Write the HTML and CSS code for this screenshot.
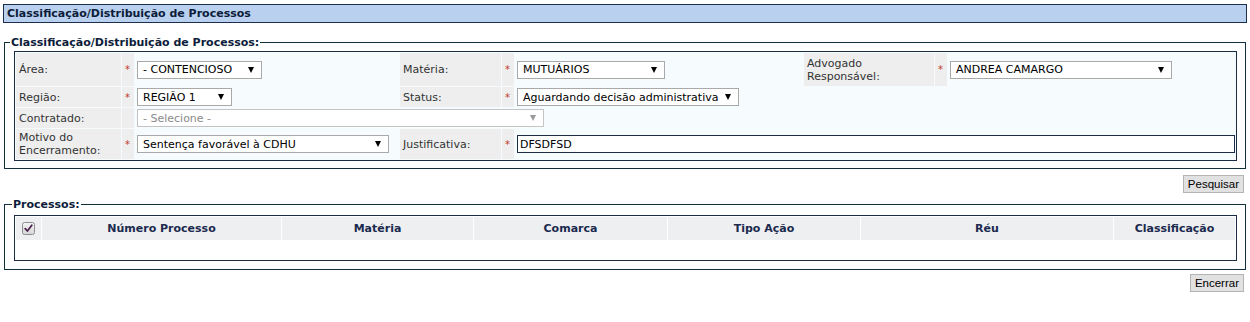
FILE: index.html
```html
<!DOCTYPE html>
<html lang="pt-BR">
<head>
<meta charset="utf-8">
<title>Classificação/Distribuição de Processos</title>
<link rel="stylesheet" href="styles.css">
</head>
<body>
<div class="page">
  <div class="titlebar">Classificação/Distribuição de Processos</div>

  <fieldset class="box box-form">
    <legend>Classificação/Distribuição de Processos:</legend>
    <table class="form">
      <colgroup>
        <col class="c-l1"><col class="c-s"><col class="c-f1">
        <col class="c-l2"><col class="c-s"><col class="c-f2">
        <col class="c-l3"><col class="c-s"><col class="c-f3">
      </colgroup>
      <tr class="r-tall">
        <td class="lbl">Área:</td>
        <td class="req">*</td>
        <td class="fld"><div class="sel w-area"><span>- CONTENCIOSO</span><i class="arr"></i></div></td>
        <td class="lbl">Matéria:</td>
        <td class="req">*</td>
        <td class="fld"><div class="sel w-mat"><span>MUTUÁRIOS</span><i class="arr"></i></div></td>
        <td class="lbl">Advogado Responsável:</td>
        <td class="req">*</td>
        <td class="fld"><div class="sel w-adv"><span>ANDREA CAMARGO</span><i class="arr"></i></div></td>
      </tr>
      <tr class="r-std">
        <td class="lbl">Região:</td>
        <td class="req">*</td>
        <td class="fld"><div class="sel w-reg"><span>REGIÃO 1</span><i class="arr"></i></div></td>
        <td class="lbl">Status:</td>
        <td class="req">*</td>
        <td class="fld" colspan="4"><div class="sel w-status"><span>Aguardando decisão administrativa</span><i class="arr"></i></div></td>
      </tr>
      <tr class="r-std">
        <td class="lbl">Contratado:</td>
        <td class="req"></td>
        <td class="fld" colspan="7"><div class="sel sel-off w-contr"><span>- Selecione -</span><i class="arr"></i></div></td>
      </tr>
      <tr class="r-mid">
        <td class="lbl">Motivo do Encerramento:</td>
        <td class="req">*</td>
        <td class="fld"><div class="sel w-mot"><span>Sentença favorável à CDHU</span><i class="arr"></i></div></td>
        <td class="lbl">Justificativa:</td>
        <td class="req">*</td>
        <td class="fld fld-wide" colspan="4"><input class="txt" type="text" value="DFSDFSD"></td>
      </tr>
    </table>
  </fieldset>

  <div class="actions"><button class="btn btn-search" type="button">Pesquisar</button></div>

  <fieldset class="box box-list">
    <legend>Processos:</legend>
    <table class="grid">
      <colgroup>
        <col class="g-chk"><col class="g-num"><col class="g-mat"><col class="g-com">
        <col class="g-tipo"><col class="g-reu"><col class="g-cls">
      </colgroup>
      <tr class="g-head">
        <th><svg class="chk" width="13" height="13" viewBox="0 0 13 13"><defs><linearGradient id="cb" x1="0" y1="0" x2="0" y2="1"><stop offset="0" stop-color="#f4f4f4"/><stop offset="1" stop-color="#d6d6d6"/></linearGradient></defs><rect x="0.5" y="0.5" width="12" height="12" rx="2" fill="url(#cb)" stroke="#8e8e8e"/><path d="M3.2 6.6 L5.4 9 L9.8 3.2" fill="none" stroke="#4f2350" stroke-width="1.8" stroke-linecap="round" stroke-linejoin="round"/></svg></th>
        <th>Número Processo</th>
        <th>Matéria</th>
        <th>Comarca</th>
        <th>Tipo Ação</th>
        <th>Réu</th>
        <th>Classificação</th>
      </tr>
      <tr class="g-empty"><td colspan="7"></td></tr>
    </table>
  </fieldset>

  <div class="actions actions-end"><button class="btn btn-close" type="button">Encerrar</button></div>
</div>
</body>
</html>
```

FILE: styles.css
```css
body {
  margin: 0;
  background: #ffffff;
  font-family: "DejaVu Sans", Verdana, sans-serif;
  font-size: 11px;
  color: #333333;
}

.page {
  padding: 4px 3px 0 3px;
}

.titlebar {
  height: 17px;
  line-height: 17px;
  border: 1px solid #1d2f4f;
  background: #b9d1ef;
  color: #0d1c3a;
  font-weight: bold;
  padding-left: 3px;
}

fieldset.box {
  margin: 13px 1px 0 1px;
  border: 1px solid #12303b;
  padding: 2px 8px 7px 9px;
  min-width: 0;
}

fieldset.box-list {
  margin-top: 5px;
  padding: 4px 8px 8px 9px;
}

legend {
  font-weight: bold;
  color: #0d1c3a;
  line-height: 13px;
  padding: 0 1px;
  margin-left: -4px;
}

.box-list legend {
  margin-left: -2px;
}

/* form table */
table.form {
  width: 100%;
  table-layout: fixed;
  border: 1px solid #1b2d45;
  border-spacing: 1px;
  background: #f6fcfe;
}

.c-l1 { width: 105px; }
.c-s { width: 12px; }
.c-f1 { width: 264px; }
.c-l2 { width: 101px; }
.c-f2 { width: 288px; }
.c-l3 { width: 130px; }
.c-f3 { width: 287px; }

.r-tall { height: 33px; }
.r-std { height: 20px; }
.r-mid { height: 30px; }

table.form td {
  padding: 0;
  vertical-align: middle;
}

table.form td.lbl {
  background: #eeeeee;
  color: #333333;
  line-height: 13px;
  padding: 0 3px;
}

table.form td.req {
  background: #eeeeee;
  color: #c0392b;
  padding: 0 0 0 3px;
  font-size: 10px;
}

table.form td.fld {
  padding: 0 0 0 2px;
}

.sel {
  display: flex;
  align-items: center;
  justify-content: space-between;
  box-sizing: border-box;
  height: 18px;
  border: 1px solid #a9a9a9;
  background: #ffffff;
  color: #000000;
  padding: 0 7px 0 5px;
  white-space: nowrap;
}

.sel-off {
  border-color: #c4c4c4;
  color: #8a8a8a;
}

.arr {
  display: block;
  width: 0;
  height: 0;
  border-left: 3.5px solid transparent;
  border-right: 3.5px solid transparent;
  border-top: 6px solid #000000;
}

.sel-off .arr {
  border-top-color: #9a9a9a;
}

.w-area { width: 125px; }
.w-reg { width: 95px; }
.w-contr { width: 407px; }
.w-mot { width: 252px; }
.w-mat { width: 148px; }
.w-status { width: 222px; }
.w-adv { width: 222px; }

.txt {
  display: block;
  box-sizing: border-box;
  width: 100%;
  height: 18px;
  margin: 0;
  border: 1px solid #1b2d45;
  padding: 0 2px;
  font-family: "DejaVu Sans", Verdana, sans-serif;
  font-size: 11px;
  color: #000000;
  background: #ffffff;
}

/* buttons */
.actions {
  display: flex;
  justify-content: flex-end;
  margin: 6px 3px 0 0;
}

.actions-end {
  margin-top: 4px;
}

.btn {
  height: 18px;
  padding: 0 4px;
  background: #e1e1e1;
  border: 1px solid #b4b4b4;
  color: #000000;
  font-family: "Liberation Sans", Tahoma, sans-serif;
  font-size: 11.5px;
  line-height: 16px;
}

/* list table */
table.grid {
  width: 100%;
  table-layout: fixed;
  border: 1px solid #1b2d45;
  border-spacing: 1px;
  background: #ffffff;
}

.g-chk { width: 25px; }
.g-num { width: 239px; }
.g-mat { width: 191px; }
.g-com { width: 193px; }
.g-tipo { width: 192px; }
.g-reu { width: 252px; }
.g-cls { width: 121px; }

table.grid th {
  height: 23px;
  padding: 0;
  background: #eeeff1;
  color: #1b2a4e;
  font-weight: bold;
  text-align: center;
  vertical-align: middle;
}

.chk {
  display: block;
  margin: 0 auto;
}

.g-empty td {
  height: 18px;
  padding: 0;
}
```
